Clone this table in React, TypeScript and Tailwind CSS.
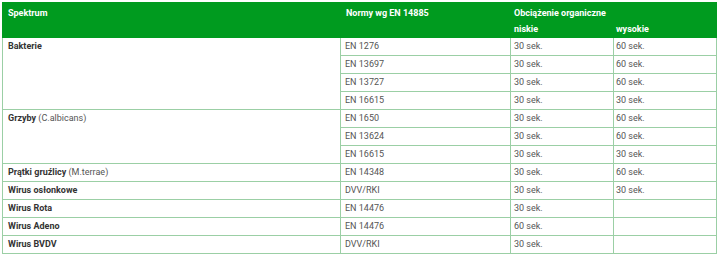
const rows: { group?: string; sub?: string; span?: number; norm: string; low: string; high: string }[] = [
  { group: 'Bakterie', span: 4, norm: 'EN 1276', low: '30 sek.', high: '60 sek.' },
  { norm: 'EN 13697', low: '30 sek.', high: '60 sek.' },
  { norm: 'EN 13727', low: '30 sek.', high: '60 sek.' },
  { norm: 'EN 16615', low: '30 sek.', high: '30 sek.' },
  { group: 'Grzyby', sub: '(C.albicans)', span: 3, norm: 'EN 1650', low: '30 sek.', high: '60 sek.' },
  { norm: 'EN 13624', low: '30 sek.', high: '60 sek.' },
  { norm: 'EN 16615', low: '30 sek.', high: '30 sek.' },
  { group: 'Prątki gruźlicy', sub: '(M.terrae)', span: 1, norm: 'EN 14348', low: '30 sek.', high: '60 sek.' },
  { group: 'Wirus osłonkowe', span: 1, norm: 'DVV/RKI', low: '30 sek.', high: '30 sek.' },
  { group: 'Wirus Rota', span: 1, norm: 'EN 14476', low: '30 sek.', high: '' },
  { group: 'Wirus Adeno', span: 1, norm: 'EN 14476', low: '60 sek.', high: '' },
  { group: 'Wirus BVDV', span: 1, norm: 'DVV/RKI', low: '30 sek.', high: '' },
];

const cell = 'border border-[#9bcfa5] h-[18px] p-0 align-middle leading-[17px]';
const head = 'text-left align-top leading-[12px] border border-[#009b1f]';

export default function App() {
  return (
    <div className="bg-white w-[720px] h-[256px] pt-[2px] pl-[2px] font-['Roboto',sans-serif] text-[9px]">
      <table className="border-collapse table-fixed w-[714px]">
        <colgroup>
          <col className="w-[338px]" />
          <col className="w-[170px]" />
          <col className="w-[103px]" />
          <col className="w-[103px]" />
        </colgroup>
        <thead className="bg-[#009b1f] text-white font-bold">
          <tr>
            <th rowSpan={2} className={`${head} pt-[4px] pl-[5px]`}>Spektrum</th>
            <th rowSpan={2} className={`${head} pt-[4px] pl-[5px]`}>Normy wg EN 14885</th>
            <th colSpan={2} className={`${head} pt-[4px] h-[18px] pl-[3px]`}>Obciążenie organiczne</th>
          </tr>
          <tr>
            <th className={`${head} pt-[2px] h-[17px] pl-[3px]`}>niskie</th>
            <th className={`${head} pt-[2px] h-[17px] pl-[2px]`}>wysokie</th>
          </tr>
        </thead>
        <tbody className="text-[#555]">
          {rows.map((r, i) => (
            <tr key={i}>
              {r.group && (
                <td rowSpan={r.span} className={`${cell} align-top pl-[5px]`}>
                  <span className="font-bold text-[#333]">{r.group}</span>
                  {r.sub && <span> {r.sub}</span>}
                </td>
              )}
              <td className={`${cell} pl-[4px]`}>{r.norm}</td>
              <td className={`${cell} pl-[3px]`}>{r.low}</td>
              <td className={`${cell} pl-[2px]`}>{r.high}</td>
            </tr>
          ))}
        </tbody>
      </table>
    </div>
  );
}
